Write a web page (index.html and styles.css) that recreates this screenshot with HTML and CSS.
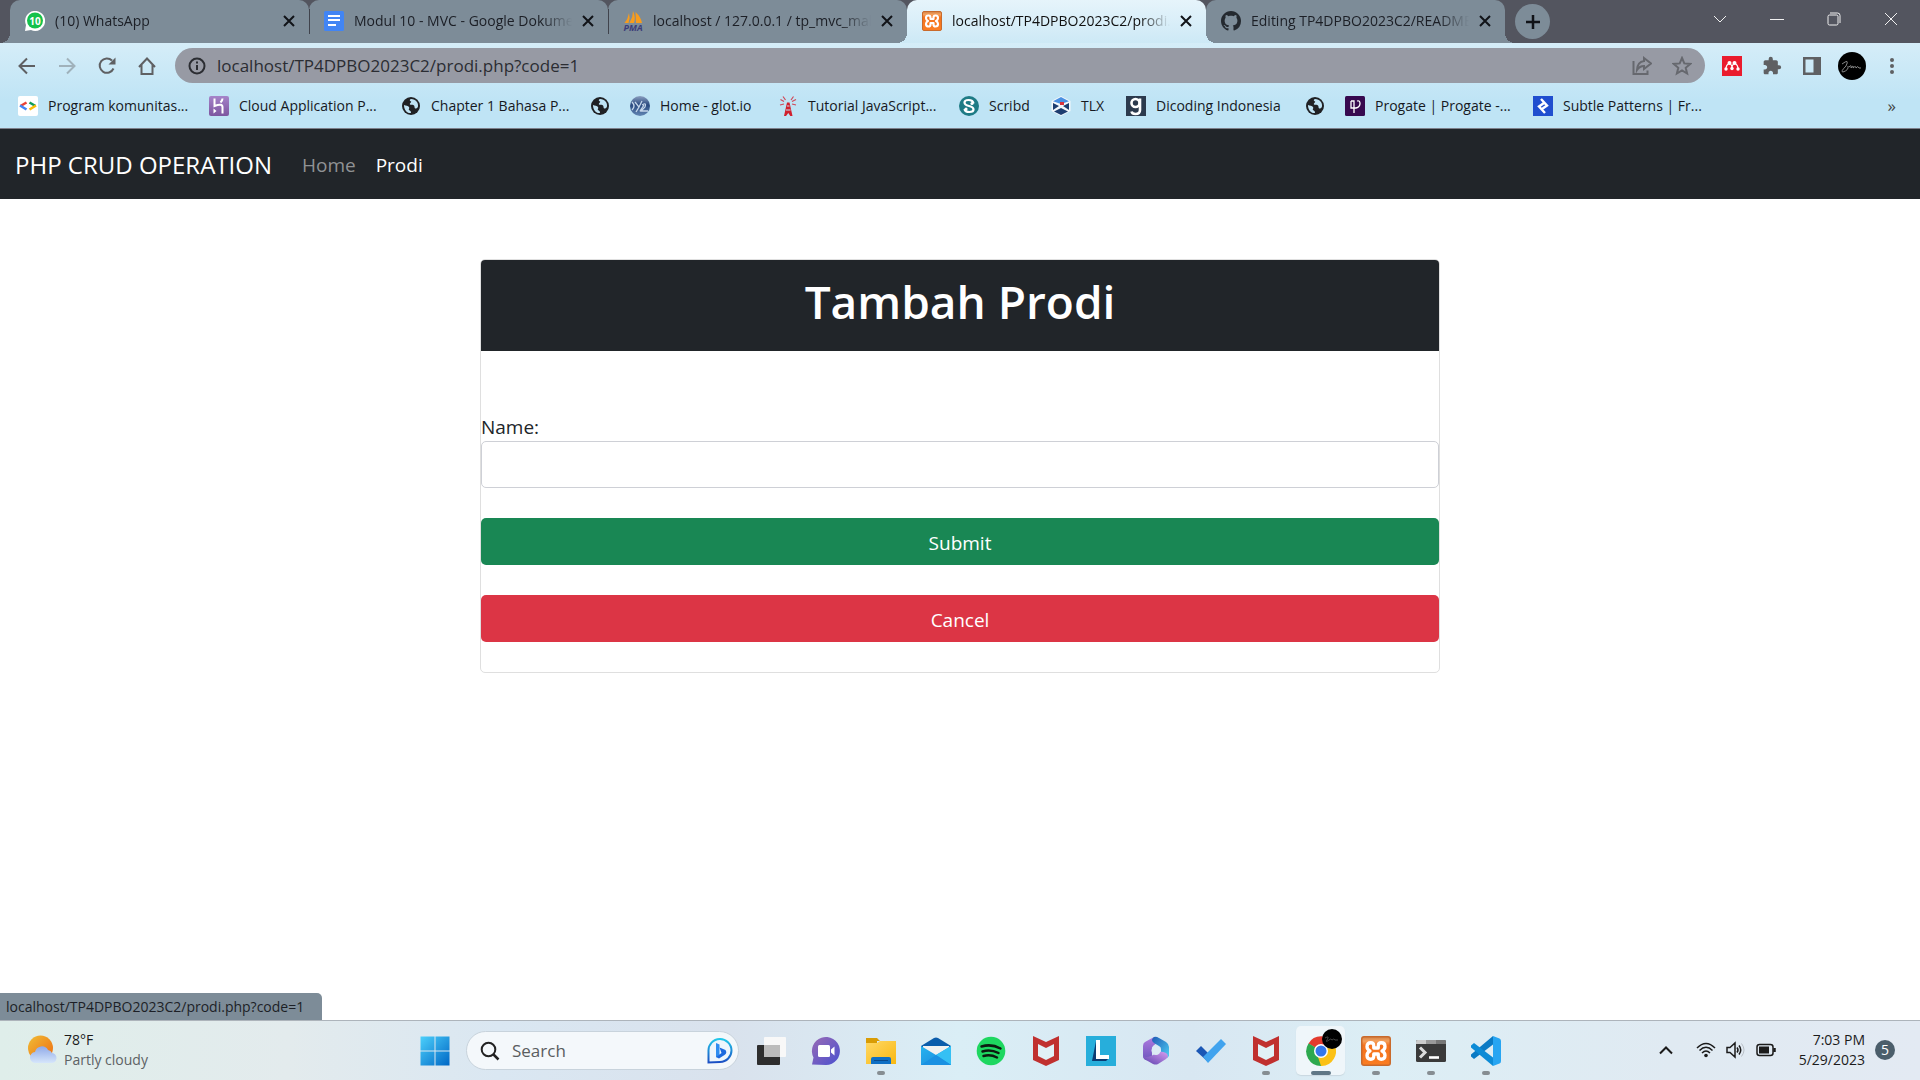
FILE: index.html
```html
<!DOCTYPE html>
<html lang="id">
<head>
<meta charset="utf-8">
<title>PHP CRUD Operation</title>
<link rel="stylesheet" href="styles.css">
</head>
<body>
<svg class="defs" width="0" height="0" aria-hidden="true">
  <defs>
    <linearGradient id="win" x1="0" y1="0" x2="1" y2="1"><stop offset="0" stop-color="#4cd0fb"/><stop offset="1" stop-color="#0067c5"/></linearGradient>
    <linearGradient id="sun" x1="0" y1="0" x2="1" y2="1"><stop offset="0" stop-color="#f0bd36"/><stop offset="1" stop-color="#ee6a10"/></linearGradient>
    <linearGradient id="cloud" x1="0" y1="0" x2="0" y2="1"><stop offset="0" stop-color="#8fa9e8"/><stop offset="1" stop-color="#d6e6fb"/></linearGradient>
    <linearGradient id="bing" x1="0" y1="0" x2="0" y2="1"><stop offset="0" stop-color="#22c8ea"/><stop offset="1" stop-color="#1b4fc4"/></linearGradient>
    <linearGradient id="chat" x1="0" y1="0" x2="1" y2="1"><stop offset="0" stop-color="#9a6bb5"/><stop offset="1" stop-color="#4a50cf"/></linearGradient>
    <linearGradient id="folder" x1="0" y1="0" x2="1" y2="1"><stop offset="0" stop-color="#ffd867"/><stop offset="1" stop-color="#f9b810"/></linearGradient>
    <linearGradient id="mail" x1="0" y1="0" x2="1" y2="1"><stop offset="0" stop-color="#27b4ef"/><stop offset="1" stop-color="#1a86dc"/></linearGradient>
    <linearGradient id="offa" x1="0" y1="0" x2="0" y2="1"><stop offset="0" stop-color="#b07be0"/><stop offset="1" stop-color="#6c55bd"/></linearGradient>
    <linearGradient id="offb" x1="0" y1="0" x2="1" y2="1"><stop offset="0" stop-color="#1f5bb5"/><stop offset="1" stop-color="#4fd0f5"/></linearGradient>
    <linearGradient id="offc" x1="0" y1="1" x2="1" y2="0"><stop offset="0" stop-color="#5a41ad"/><stop offset="1" stop-color="#d79cf0"/></linearGradient>
    <linearGradient id="heroku" x1="0" y1="0" x2="0" y2="1"><stop offset="0" stop-color="#a584c9"/><stop offset="1" stop-color="#7d559f"/></linearGradient>
    <linearGradient id="glot" x1="0" y1="0" x2="0" y2="1"><stop offset="0" stop-color="#8b9fc0"/><stop offset=".45" stop-color="#2a4a80"/><stop offset="1" stop-color="#6387b4"/></linearGradient>
    <linearGradient id="xamppbg" x1="0" y1="0" x2="0" y2="1"><stop offset="0" stop-color="#d08145"/><stop offset=".15" stop-color="#f5a25e"/><stop offset=".3" stop-color="#f4731d"/><stop offset="1" stop-color="#fa7d22"/></linearGradient>
    <symbol id="globe" viewBox="0 0 20 20"><circle cx="10" cy="10" r="9" fill="#202124"/><path d="M3 9c2 1 4 .5 5 2s-1 2 0 3 2 .5 2 3c-4 .5-7-3-7-8zM10 3c-2 1-1 2 0 2.500s-2 2-1 3 3-.5 4 1 0 3 2 3c1 0 1.500-1 2-2 .5-4-2-7-7-7.500z" fill="#bfe3f4"/></symbol>
    <symbol id="xampp" viewBox="0 0 20 20"><rect x=".5" y=".5" width="19" height="19" rx="1.500" fill="url(#xamppbg)" stroke="#c96a2c"/><path d="M4 7q0-2.500 2.500-2.500 2 0 2 2V8h3V6.500q0-2 2-2Q16 4.500 16 7q0 2-2 3 2 1 2 3 0 2.500-2.500 2.500-2 0-2-2V12h-3v1.500q0 2-2 2Q4 15.500 4 13q0-2 2-3-2-1-2-3z" fill="none" stroke="#fff" stroke-width="2.200" stroke-linejoin="round"/></symbol>
    <symbol id="mcafee" viewBox="0 0 30 30"><path d="M2 0l13 6 13-6v24l-13 6-13-6z" fill="#c0302f"/><path d="M7 8l8 4 8-4v12l-8 4-8-4z" fill="#e1f0f7"/></symbol>
    <symbol id="close" viewBox="0 0 12 12"><path d="M1 1l10 10M11 1L1 11" fill="none" stroke="#111318" stroke-width="2"/></symbol>
  </defs>
</svg>

<header class="browser">
  <div class="tabstrip">
    <div class="tab tab-first">
      <svg class="icon20" viewBox="0 0 20 20"><path d="M0 20l1-6A10 10 0 1 1 6 19z" fill="#fff"/><circle cx="10" cy="9.500" r="8" fill="#14c24b"/><text x="10" y="13.500" text-anchor="middle" class="wa">10</text></svg>
      <span class="tab-title">(10) WhatsApp</span>
      <button class="tab-close" aria-label="Close"><svg viewBox="0 0 12 12"><use href="#close"/></svg></button>
    </div>
    <div class="tab divided">
      <svg class="icon20" viewBox="0 0 20 20"><rect width="20" height="20" rx="1.500" fill="#4285f4"/><path d="M4 5h12M4 9h12M4 14h8" stroke="#fff" stroke-width="2.200"/></svg>
      <span class="tab-title">Modul 10 - MVC - Google Dokumen</span>
      <button class="tab-close" aria-label="Close"><svg viewBox="0 0 12 12"><use href="#close"/></svg></button>
    </div>
    <div class="tab divided">
      <svg class="icon20" viewBox="0 0 20 20"><path d="M1.500 12Q5 8 6 2q1.500 5-.5 10zM6.500 12Q10 6 10 0q3 6 1 12zM12.500 1q5.500 5 6.500 11h-6z" fill="#f89c1c"/><text x="10" y="20" text-anchor="middle" class="pma">PMA</text></svg>
      <span class="tab-title">localhost / 127.0.0.1 / tp_mvc_mahasiswa</span>
      <button class="tab-close" aria-label="Close"><svg viewBox="0 0 12 12"><use href="#close"/></svg></button>
    </div>
    <div class="tab active">
      <svg class="icon20" viewBox="0 0 20 20"><use href="#xampp"/></svg>
      <span class="tab-title">localhost/TP4DPBO2023C2/prodi.php</span>
      <button class="tab-close" aria-label="Close"><svg viewBox="0 0 12 12"><use href="#close"/></svg></button>
    </div>
    <div class="tab tab-last">
      <svg class="icon20" viewBox="0 0 16 16"><path fill="#24292f" d="M8 0C3.580 0 0 3.580 0 8c0 3.540 2.290 6.530 5.470 7.590.4.070.55-.17.55-.38 0-.19-.01-.82-.01-1.490-2.010.37-2.530-.49-2.690-.94-.09-.23-.48-.94-.82-1.130-.28-.15-.68-.52-.01-.53.63-.01 1.080.58 1.230.82.72 1.210 1.870.87 2.330.66.07-.52.28-.87.51-1.070-1.780-.2-3.640-.89-3.640-3.950 0-.87.31-1.590.82-2.150-.08-.2-.36-1.020.08-2.120 0 0 .67-.21 2.200.82.64-.18 1.320-.27 2-.27s1.360.09 2 .27c1.530-1.040 2.200-.82 2.200-.82.44 1.100.16 1.920.08 2.120.51.56.82 1.270.82 2.150 0 3.070-1.870 3.750-3.650 3.950.29.25.54.73.54 1.480 0 1.070-.01 1.930-.01 2.200 0 .21.15.46.55.38A8.010 8.010 0 0 0 16 8c0-4.420-3.580-8-8-8z"/></svg>
      <span class="tab-title">Editing TP4DPBO2023C2/README.md</span>
      <button class="tab-close" aria-label="Close"><svg viewBox="0 0 12 12"><use href="#close"/></svg></button>
    </div>
    <button class="new-tab" aria-label="New tab"><svg width="16" height="16" viewBox="0 0 16 16"><path d="M8 1v14M1 8h14" stroke="#111318" stroke-width="2.500"/></svg></button>
    <div class="window-controls">
      <button aria-label="Search tabs"><svg viewBox="0 0 14 14"><path d="M1 4l6 6 6-6"/></svg></button>
      <button aria-label="Minimize"><svg viewBox="0 0 14 14"><path d="M0 7.500h14"/></svg></button>
      <button aria-label="Restore"><svg viewBox="0 0 14 14"><rect x="1" y="3" width="10" height="10" rx="1.500"/><path d="M3 1h7.500q2.500 0 2.500 2.500V11"/></svg></button>
      <button aria-label="Close window"><svg viewBox="0 0 14 14"><path d="M1 1l12 12M13 1L1 13"/></svg></button>
    </div>
  </div>

  <div class="toolbar">
    <nav class="history">
      <button aria-label="Back"><svg viewBox="0 0 20 20"><path d="M18 10H3M10 2.500L2.500 10l7.500 7.500"/></svg></button>
      <button aria-label="Forward" class="dim"><svg viewBox="0 0 20 20"><path d="M2 10h15M10 2.500l7.500 7.500-7.500 7.500"/></svg></button>
      <button aria-label="Reload"><svg viewBox="0 0 20 20"><path d="M16.500 12.500a7.200 7.200 0 1 1-1.500-8"/><path d="M18.500 1.500v7h-7z" fill="#5f6063" stroke="none"/></svg></button>
      <button aria-label="Home"><svg viewBox="0 0 20 20"><path d="M2 11l8-8.500 8 8.500M4.500 9v9h11V9"/></svg></button>
    </nav>
    <div class="omnibox">
      <svg class="icon20" viewBox="0 0 20 20"><circle cx="10" cy="10" r="7.500" fill="none" stroke="#2b2d32" stroke-width="2"/><path d="M10 9v5M10 5.500v2" stroke="#2b2d32" stroke-width="2"/></svg>
      <input class="url" type="text" aria-label="Address" value="localhost/TP4DPBO2023C2/prodi.php?code=1">
      <button aria-label="Share"><svg viewBox="0 0 20 20"><path d="M1.500 5v13h14v-3.500M12 2l7 5.500-7 5.500V10c-3 0-5 1-7 4 .3-5 3-8.500 7-9z"/></svg></button>
      <button aria-label="Bookmark"><svg viewBox="0 0 20 20"><path d="M10 2l2.300 5.400 5.900.5-4.500 3.900 1.400 5.700L10 14.400l-5.100 3.100 1.400-5.700-4.500-3.900 5.900-.5z"/></svg></button>
    </div>
    <div class="extensions">
      <button aria-label="Mendeley"><svg viewBox="0 0 20 20"><rect width="20" height="20" fill="#ea1b2d"/><path d="M4 13q0-4 3-5.500M7.500 7.500Q10 8.500 10 12.500M10 12.500q0-4 2.500-5M13 7.500q3 1.500 3 5.500" fill="none" stroke="#fff" stroke-width="1.200"/><g fill="#fff"><circle cx="7.500" cy="7" r="2"/><circle cx="12.500" cy="7" r="2"/><circle cx="4" cy="13" r="1.700"/><circle cx="10" cy="12.500" r="1.700"/><circle cx="16" cy="13" r="1.700"/></g></svg></button>
      <button aria-label="Extensions"><svg viewBox="0 0 24 24"><path fill="#5f6063" d="M20.500 11H19V7c0-1.100-.9-2-2-2h-4V3.500a2.500 2.500 0 0 0-5 0V5H4c-1.100 0-2 .9-2 2v3.800h1.500c1.500 0 2.700 1.200 2.700 2.700S5 16.200 3.500 16.200H2V20c0 1.100.9 2 2 2h3.800v-1.500c0-1.500 1.200-2.700 2.700-2.700s2.700 1.200 2.700 2.700V22H17c1.100 0 2-.9 2-2v-4h1.500a2.500 2.500 0 0 0 0-5z"/></svg></button>
      <button aria-label="Side panel"><svg viewBox="0 0 20 20"><path fill="#5f6063" fill-rule="evenodd" d="M1 1h18v18H1zM3.500 3.500v13h8v-13z"/></svg></button>
      <button aria-label="Profile" class="avatar"><svg viewBox="0 0 28 28"><circle cx="14" cy="14" r="14" fill="#000"/><path d="M4 12q8-6 4 2-6 6-3 6 6-2 5-6M11 15q3-3 2 1 3-4 2 0 3-3 3 0 2-3 3 0h2" fill="none" stroke="#8a8a8a"/></svg></button>
      <button aria-label="Menu"><svg viewBox="0 0 20 20" fill="#5f6063"><circle cx="10" cy="4" r="2"/><circle cx="10" cy="10" r="2"/><circle cx="10" cy="16" r="2"/></svg></button>
    </div>
  </div>

  <nav class="bookmarks">
    <a href="#"><svg class="icon20" viewBox="0 0 20 20"><rect width="20" height="20" rx="2" fill="#fff"/><path d="M8.500 6.500L2.500 10" stroke="#ea4335" stroke-width="2.600"/><path d="M2 9.500l6.500 4" stroke="#4285f4" stroke-width="2.600"/><path d="M11.500 6.500l6 3.500" stroke="#0f9d58" stroke-width="2.600"/><path d="M18 9.500l-6.500 4" stroke="#fbbc05" stroke-width="2.600"/></svg><span>Program komunitas...</span></a>
    <a href="#"><svg class="icon20" viewBox="0 0 20 20"><rect width="20" height="20" rx="2" fill="url(#heroku)"/><path d="M5.500 2.500v7.500q8-3 8 1v6.500M13.500 2.500q0 2-2 4" fill="none" stroke="#fff" stroke-width="2"/><path d="M4.500 12.500l3 2.500-3 2.500z" fill="#fff"/></svg><span>Cloud Application P...</span></a>
    <a href="#"><svg class="icon20" viewBox="0 0 20 20"><use href="#globe"/></svg><span>Chapter 1 Bahasa P...</span></a>
    <a href="#" aria-label="Bookmark"><svg class="icon20" viewBox="0 0 20 20"><use href="#globe"/></svg></a>
    <a href="#"><svg class="icon20" viewBox="0 0 20 20"><circle cx="10" cy="10" r="10" fill="url(#glot)"/><path d="M2 6q4 4 0 8M5 6l4 5-3 5M12 5l-3 6M12 9q5-3 3 2l-4 4h7M10 15l4-6" fill="none" stroke="#c5d6ea" stroke-width="1.300"/></svg><span>Home - glot.io</span></a>
    <a href="#"><svg class="icon20" viewBox="0 0 20 20"><path d="M9 6.500h2.500l3 13.500h-2.200l-2-3-2.300 3H6z" fill="#d0202e"/><path d="M9 10h2.500M8 14h4.500" stroke="#bfe3f4" stroke-width="1.200"/><path d="M7.500 4L5 .5M6 5.500L2.500 3.500M6 8l-4 1M13 4L15.500.5M14 5.500L18 3.500M14 8l4 1" stroke="#d04858" stroke-width="1.200"/></svg><span>Tutorial JavaScript...</span></a>
    <a href="#"><svg class="icon20" viewBox="0 0 20 20"><circle cx="10" cy="10" r="10" fill="#1e7b85"/><path d="M14.500 7.500Q14 4 9.500 4 5.500 4 5.500 6.500T10 10t4.500 3.500T10.500 16Q6 16 5.500 13" fill="none" stroke="#fff" stroke-width="2.200"/><circle cx="13" cy="7.500" r="1.600" fill="#fff"/><circle cx="7" cy="13" r="1.600" fill="#fff"/></svg><span>Scribd</span></a>
    <a href="#"><svg class="icon20" viewBox="0 0 20 20"><path d="M10 0l9.500 5v10L10 20 .5 15V5z" fill="#f4f8fc"/><path d="M10 1l8 4.200L10 8 2 5.200z" fill="#4a90e2"/><path d="M2 7l6 3-6 4zM18 7l-6 3 6 4zM3 15.500l7-3.500 7 3.500-7 3.500z" fill="#1d3d70"/><path d="M9 6h4v3H9z" fill="#d8323c"/></svg><span>TLX</span></a>
    <a href="#"><svg class="icon20" viewBox="0 0 20 20"><rect width="20" height="20" fill="#2c3a4d"/><g fill="none" stroke="#fff" stroke-width="2.600"><circle cx="9.500" cy="7" r="4"/><path d="M14 2.500V14q0 4-4.500 4-3.500 0-4-2.500"/></g></svg><span>Dicoding Indonesia</span></a>
    <a href="#" aria-label="Bookmark"><svg class="icon20" viewBox="0 0 20 20"><use href="#globe"/></svg></a>
    <a href="#"><svg class="icon20" viewBox="0 0 20 20"><rect width="20" height="20" rx="1.500" fill="#37094f"/><path d="M6 5v7h3v5M6 5h3v7h2q4-1 4-4.500T12 5" fill="none" stroke="#fff" stroke-width="1.300"/></svg><span>Progate | Progate -...</span></a>
    <a href="#"><svg class="icon20" viewBox="0 0 20 20"><rect width="20" height="20" fill="#204ecf"/><path d="M8 3l6 6.500-5 3.500M12 17l-6-6.500L11 7" fill="none" stroke="#fff" stroke-width="2.400"/></svg><span>Subtle Patterns | Fr...</span></a>
    <button class="more" aria-label="More bookmarks">»</button>
  </nav>
</header>

<main class="page">
  <nav class="navbar">
    <a class="brand" href="#">PHP CRUD OPERATION</a>
    <a class="nav-link" href="#">Home</a>
    <a class="nav-link current" href="#">Prodi</a>
  </nav>
  <form class="card">
    <h1 class="card-header">Tambah Prodi</h1>
    <div class="card-body">
      <label for="name">Name:</label>
      <input id="name" class="form-control" type="text">
      <button class="btn btn-success" type="submit">Submit</button>
      <button class="btn btn-danger" type="button">Cancel</button>
    </div>
  </form>
  <div class="status">localhost/TP4DPBO2023C2/prodi.php?code=1</div>
</main>

<footer class="taskbar">
  <div class="weather">
    <svg width="30" height="30" viewBox="0 0 30 30"><circle cx="13.500" cy="13" r="12.500" fill="url(#sun)"/><path d="M9 28a5.500 5.500 0 0 1-1-11 7 7 0 0 1 13-2 5 5 0 0 1 4 3 5 5 0 0 1-1 10z" fill="url(#cloud)"/></svg>
    <div><div>78°F</div><div class="muted">Partly cloudy</div></div>
  </div>
  <div class="apps">
    <button class="app" aria-label="Start"><svg viewBox="0 0 30 30"><path d="M.5.500h14v14H.500zM15.500.5h14v14h-14zM.5 15.500h14v14H.500zM15.500 15.500h14v14h-14z" fill="url(#win)"/></svg></button>
    <div class="search">
      <svg width="20" height="20" viewBox="0 0 20 20"><circle cx="8.500" cy="8.500" r="6.800" fill="none" stroke="#222" stroke-width="2"/><path d="M13.500 13.500l5 5" stroke="#222" stroke-width="2.500"/></svg>
      <input type="text" aria-label="Search" placeholder="Search">
      <svg width="26" height="26" viewBox="0 0 26 26"><path d="M1.500 24.500V13A11.500 11.500 0 1 1 13 24z" fill="#eef6fc" stroke="url(#bing)" stroke-width="2"/><path d="M9 5l3.500 1.500V17L9 19.500z" fill="#2f8df0"/><path d="M12.500 9.500l6 2.500q2 3-1 5L12 20.500 9 19l5.500-4z" fill="#1c69de"/></svg>
    </div>
    <button class="app" aria-label="Task view"><svg viewBox="0 0 30 30"><rect x="1" y="9" width="23" height="20" rx="1" fill="#2e2e2e"/><rect x="8" y="1" width="22" height="20" rx="1" fill="#f8f8f8"/><rect x="8" y="9" width="16" height="12" fill="#bcbcbc"/></svg></button>
    <button class="app" aria-label="Chat"><svg viewBox="0 0 30 30"><path d="M1 28.500l1.500-7A14 14 0 1 1 15 29z" fill="url(#chat)"/><rect x="7" y="9" width="12" height="12" rx="1.500" fill="#fff"/><path d="M20 13.500l3.500-3v9l-3.500-3z" fill="#fff"/></svg></button>
    <button class="app running" aria-label="File Explorer"><svg viewBox="0 0 30 30"><path d="M0 2h11l3 3h-3v5H0z" fill="#d99c05"/><path d="M0 7h11l3-2h16v23H0z" fill="url(#folder)"/><path d="M5 28v-5q0-2 2-2h16q2 0 2 2v5z" fill="#0f6fc4"/><path d="M8 24.500h14" stroke="#0a4a8c"/></svg></button>
    <button class="app" aria-label="Mail"><svg viewBox="0 0 30 30"><path d="M0 10L13 2q2-1 4 0l13 8v6H0z" fill="#0b5cab"/><path d="M2 10h26v8l-13 6-13-6z" fill="#f1f1f1"/><path d="M0 10l15 9 15-9v19H0z" fill="url(#mail)"/><path d="M15 19l15-9v19z" fill="#35c0f4"/><path d="M0 29l15-10 15 10z" fill="#1a91e2"/></svg></button>
    <button class="app" aria-label="Spotify"><svg viewBox="0 0 30 30"><circle cx="15" cy="15" r="14.300" fill="#1ed760"/><path d="M5.500 10.500q10-3 19 2M6.500 15.500q8-2.500 16 1.500M7.500 20q7-2 13.500 1.500" fill="none" stroke="#0c1a10" stroke-width="2.500" stroke-linecap="round"/></svg></button>
    <button class="app" aria-label="McAfee"><svg viewBox="0 0 30 30"><use href="#mcafee"/></svg></button>
    <button class="app" aria-label="Dictionary"><svg viewBox="0 0 30 30"><rect width="30" height="30" fill="#27aedb"/><path d="M10 5L6 25h14l3-3H10z" fill="#0a3b72"/><path d="M10 4h4v15h9v4H10z" fill="#fff"/></svg></button>
    <button class="app" aria-label="Microsoft 365"><svg viewBox="0 0 30 30"><path d="M13 1L4 6q-2 1-2 4v10q0 3 3 4 4 1 6-3V12q0-2 5-5z" fill="url(#offa)"/><path d="M13 1q2-1 5 1l7 4q3 2 3 5v9q-2 3-5 2l-3-2v-7q0-2-2-3l-5-3q-4-3 0-6z" fill="url(#offb)"/><path d="M2 20q3 2 8 0l8-4q3-1 7 1 4 3 0 6l-8 5q-2 1-5 0l-7-4q-2-1-3-4z" fill="url(#offc)"/><circle cx="15" cy="14.500" r="4.500" fill="#dcebf4"/></svg></button>
    <button class="app" aria-label="To Do"><svg viewBox="0 0 30 30"><path d="M0 15l5-5 8 8-2 7z" fill="#1b57b5"/><path d="M7 21L25 3l5 5-18 19z" fill="#41a3ee"/></svg></button>
    <button class="app running" aria-label="McAfee Security"><svg viewBox="0 0 30 30"><use href="#mcafee"/></svg></button>
    <button class="app running selected" aria-label="Google Chrome"><svg viewBox="0 0 30 30"><path d="M15 15L2.500 7.500A14.700 14.700 0 0 1 28 8z" fill="#e33b2e"/><path d="M15 15l13-7a14.700 14.700 0 0 1-13 22z" fill="#fbc116"/><path d="M15 15v15A14.700 14.700 0 0 1 2.500 7.500z" fill="#2da94f"/><path d="M15 30l7-11-7-4-3 6z" fill="#fbc116"/><path d="M2.500 7.500L9 18l6-3z" fill="#2da94f"/><circle cx="15" cy="15" r="7" fill="#fff"/><circle cx="15" cy="15" r="5.500" fill="#3577ea"/></svg><svg class="profile-badge" viewBox="0 0 20 20"><circle cx="10" cy="10" r="10" fill="#000"/><path d="M3 9q5-3 2 2-2 3 2 0 2-2 3 0 2-2 3 0h3" fill="none" stroke="#444"/></svg></button>
    <button class="app running" aria-label="XAMPP"><svg viewBox="0 0 30 30"><use href="#xampp"/></svg></button>
    <button class="app running" aria-label="Terminal"><svg viewBox="0 0 30 30"><rect y="4" width="30" height="22" rx="1.500" fill="#3a3a3a"/><path d="M0 8V5.500Q0 4 1.500 4H10v4z" fill="#ccc"/><path d="M10 4h10v4H10z" fill="#999"/><path d="M20 4h8.500Q30 4 30 5.500V8H20z" fill="#777"/><path d="M4 11.500l5 5-5 5" fill="none" stroke="#ddd" stroke-width="3"/><path d="M13 21.500h10" stroke="#fff" stroke-width="2.600"/></svg></button>
    <button class="app running" aria-label="Visual Studio Code"><svg viewBox="0 0 30 30"><path d="M22 0v8.500L3 23 0 20.500v-2z" fill="#0a7ac4"/><path d="M22 30v-8.500L3 7 0 9.500v2z" fill="#0d8bd6"/><path d="M22 0l6.500 2.500Q30 3 30 5v20q0 2-1.500 2.500L22 30z" fill="#27a5f2"/></svg></button>
  </div>
  <div class="tray">
    <svg width="14" height="10" viewBox="0 0 14 10"><path d="M1 8.500l6-6 6 6" stroke-width="2"/></svg>
    <svg width="20" height="16" viewBox="0 0 20 16"><path d="M1 6q9-9 18 0M3.500 8.500q6.500-6.500 13 0M6 11q4-4 8 0" stroke-width="1.500"/><circle cx="10" cy="13.500" r="1.800" fill="#1b1b1b" stroke="none"/></svg>
    <svg width="20" height="18" viewBox="0 0 20 18"><path d="M1 6.500h3l5-4.500v14l-5-4.500H1zM11 6.500q2 2.500 0 5M13 4.500q3.500 4.500 0 9" stroke-width="1.500"/><path d="M15.500 2.500q5 6.500 0 13" stroke="#b9bfc6"/></svg>
    <svg width="20" height="14" viewBox="0 0 20 14"><rect x="1" y="1.500" width="16" height="11" rx="2.500" stroke-width="1.500"/><rect x="3" y="3.500" width="10" height="7" fill="#1b1b1b" stroke="none"/><path d="M18.500 5v4" stroke-width="2.500"/></svg>
    <div class="clock"><div>7:03 PM</div><div>5/29/2023</div></div>
    <span class="count">5</span>
  </div>
</footer>
</body>
</html>
```
FILE: styles.css
```css
* {
  box-sizing: border-box;
}

body {
  margin: 0;
  min-height: 100vh;
  display: flex;
  flex-direction: column;
  background: #fff;
  color: #212529;
  font-family: "Open Sans", "Noto Sans", sans-serif;
  font-size: 14px;
  line-height: 20px;
}

button,
input {
  font: inherit;
  color: inherit;
}

button {
  border: 0;
  padding: 0;
  background: none;
}

a {
  color: inherit;
  text-decoration: none;
}

svg {
  display: block;
  flex: none;
}

.defs {
  position: absolute;
}

.icon20 {
  width: 20px;
  height: 20px;
}

/* Browser frame */

.browser {
  background: linear-gradient(#e6f4fb, #bfe4f5 100px);
  border-bottom: 1px solid #7d7f8a;
}

.tabstrip {
  display: flex;
  align-items: stretch;
  height: 43px;
  padding-left: 10px;
  background: #53555f;
}

.tab {
  position: relative;
  display: flex;
  align-items: center;
  gap: 10px;
  flex: 0 1 299px;
  min-width: 0;
  padding: 0 14px 2px 15px;
  border-radius: 10px 10px 0 0;
  background: #7d8c98;
  color: #1c1f26;
}

.tab-title {
  flex: 1;
  min-width: 0;
  overflow: hidden;
  white-space: nowrap;
  mask-image: linear-gradient(to left, transparent, #000 30px);
}

.tab-close svg {
  width: 12px;
  height: 12px;
}

.tab.divided::before {
  content: "";
  position: absolute;
  left: 0;
  top: 9px;
  height: 25px;
  border-left: 1px solid #40434c;
}

.tab.active {
  background: linear-gradient(#e6f4fb, #cde9f6);
  color: #111;
}

.tab.active::before,
.tab.active::after,
.tab-first::before,
.tab-last::after {
  content: "";
  position: absolute;
  z-index: 1;
  bottom: 0;
  width: 10px;
  height: 10px;
}

.tab.active::before {
  right: 100%;
  background: radial-gradient(circle at 0 0, transparent 10px, #cde9f6 10px);
}

.tab.active::after {
  left: 100%;
  background: radial-gradient(circle at 100% 0, transparent 10px, #cde9f6 10px);
}

.tab-first::before {
  right: 100%;
  background: radial-gradient(circle at 0 0, transparent 10px, #7d8c98 10px);
}

.tab-last::after {
  left: 100%;
  background: radial-gradient(circle at 100% 0, transparent 10px, #7d8c98 10px);
}

.new-tab {
  display: grid;
  place-items: center;
  width: 35px;
  height: 35px;
  margin: 4px 10px;
  border-radius: 50%;
  background: #7d8c98;
}

.window-controls {
  display: flex;
  margin-left: auto;
  padding: 0 1px 5px 0;
}

.window-controls button {
  display: grid;
  place-items: center;
  width: 57px;
}

.window-controls svg {
  width: 14px;
  height: 14px;
  fill: none;
  stroke: #f1f1f1;
  stroke-width: 1;
}

.toolbar {
  display: flex;
  align-items: center;
  gap: 17px;
  height: 45px;
  padding: 0 18px 0 17px;
}

.toolbar button svg {
  width: 20px;
  height: 20px;
}

.history {
  display: flex;
  gap: 20px;
}

.history svg {
  fill: none;
  stroke: #5f6063;
  stroke-width: 2;
}

.history .dim {
  opacity: 0.4;
}

.omnibox {
  flex: 1;
  display: flex;
  align-items: center;
  gap: 20px;
  height: 35px;
  padding: 0 13px 0 12px;
  margin-left: 1px;
  border-radius: 18px;
  background: #979aa4;
}

.omnibox button svg {
  fill: none;
  stroke: #66686e;
  stroke-width: 2;
}

.omnibox .url {
  flex: 1;
  min-width: 0;
  margin-left: -10px;
  padding: 0;
  border: 0;
  outline: 0;
  background: none;
  color: #2b2d33;
  font-size: 17px;
}

.extensions {
  display: flex;
  align-items: center;
  gap: 20px;
}

.toolbar .avatar {
  margin: 0 -4px;
}

.toolbar .avatar svg {
  width: 28px;
  height: 28px;
}

.bookmarks {
  display: grid;
  grid-template-columns: 191px 192px 189px 40px 148px 181px 92px 75px 179px 40px 188px auto 1fr;
  align-items: center;
  height: 40px;
  padding: 0 24px 4px 18px;
  color: #16191f;
  white-space: nowrap;
}

.bookmarks a {
  display: flex;
  align-items: center;
  gap: 10px;
}

.bookmarks .more {
  justify-self: end;
  font-size: 17px;
  color: #444;
}

.wa {
  font: 700 10px "Open Sans", sans-serif;
  fill: #fff;
}

.pma {
  font: italic 700 9px "Open Sans", sans-serif;
  fill: #3c3c78;
}

/* Web page */

.page {
  position: relative;
  flex: 1;
}

.navbar {
  display: flex;
  align-items: center;
  height: 70px;
  padding: 2px 15px 0;
  background: #212529;
  color: #fff;
}

.brand {
  margin-right: 20px;
  font-size: 24px;
}

.nav-link {
  padding: 10px;
  font-size: 19px;
  color: #909294;
}

.nav-link.current {
  color: #fff;
}

.card {
  width: 50%;
  margin: 60px auto 0;
  border: 1px solid #dfdfdf;
  border-radius: 5px;
}

.card-header {
  margin: 0;
  padding: 11px 20px 20px;
  border-radius: 4px 4px 0 0;
  background: #212529;
  color: #fff;
  font-size: 46px;
  font-weight: 600;
  line-height: 60px;
  text-align: center;
}

.card-body {
  display: flex;
  flex-direction: column;
  padding: 62px 0 30px;
  font-size: 19px;
  line-height: 28px;
}

.form-control {
  width: 100%;
  height: 47px;
  margin-bottom: 30px;
  padding: 0 15px;
  border: 1px solid #ced0d6;
  border-radius: 5px;
  background: #fff;
}

.btn {
  height: 47px;
  padding-top: 2px;
  border-radius: 5px;
  color: #fff;
}

.btn-success {
  margin-bottom: 30px;
  background: #198754;
}

.btn-danger {
  background: #dc3545;
}

.status {
  position: absolute;
  left: 0;
  bottom: 0;
  padding: 4px 18px 3px 6px;
  border-radius: 0 5px 0 0;
  background: #7d8c98;
  color: #1c1f26;
}

/* Taskbar */

.taskbar {
  display: grid;
  grid-template-columns: 1fr auto 1fr;
  align-items: center;
  height: 60px;
  border-top: 1px solid #adb4bb;
  background: linear-gradient(90deg, #dfeeea, #e3ebed 15%, #dae7f2 26%, #d9e2ed 38%, #daeef6 50%, #d8e7f2 62%, #dceef5 72%, #e0eaf2 87%, #e3eaf3);
  color: #1b1b1b;
}

.weather {
  display: flex;
  align-items: center;
  gap: 7px;
  padding: 0 0 2px 27px;
}

.muted {
  color: #5d6265;
}

.apps {
  display: flex;
  align-items: center;
}

.app {
  position: relative;
  display: grid;
  place-items: center;
  width: 55px;
  height: 49px;
}

.app > svg {
  width: 30px;
  height: 30px;
}

.running::after {
  content: "";
  position: absolute;
  bottom: 0;
  width: 8px;
  height: 4px;
  border-radius: 2px;
  background: #868d92;
}

.selected::before {
  content: "";
  position: absolute;
  inset: 0 3px;
  border-radius: 5px;
  background: #eff6fa;
  box-shadow: 0 1px 1px #c9d8e0;
}

.selected > svg {
  position: relative;
}

.selected::after {
  width: 20px;
  background: #5f7786;
}

.app > .profile-badge {
  position: absolute;
  top: 3px;
  right: 6px;
  width: 20px;
  height: 20px;
}

.search {
  display: flex;
  align-items: center;
  gap: 12px;
  width: 273px;
  height: 39px;
  margin: 0 4px;
  padding: 0 5px 0 13px;
  border: 1px solid #c8d3dc;
  border-radius: 20px;
  background: #f4f8fb;
}

.search input {
  flex: 1;
  min-width: 0;
  padding: 0;
  border: 0;
  outline: 0;
  background: none;
  font-size: 17px;
}

.search input::placeholder {
  color: #5a5d60;
  opacity: 1;
}

.tray {
  display: flex;
  align-items: center;
  justify-content: flex-end;
  gap: 10px;
  padding: 0 25px 2px 0;
}

.tray svg {
  fill: none;
  stroke: #1b1b1b;
}

.tray svg:first-child {
  margin-right: 13px;
}

.clock {
  margin-left: 13px;
  text-align: right;
}

.count {
  width: 20px;
  border-radius: 50%;
  background: #4b5e6b;
  color: #fff;
  text-align: center;
}
```
